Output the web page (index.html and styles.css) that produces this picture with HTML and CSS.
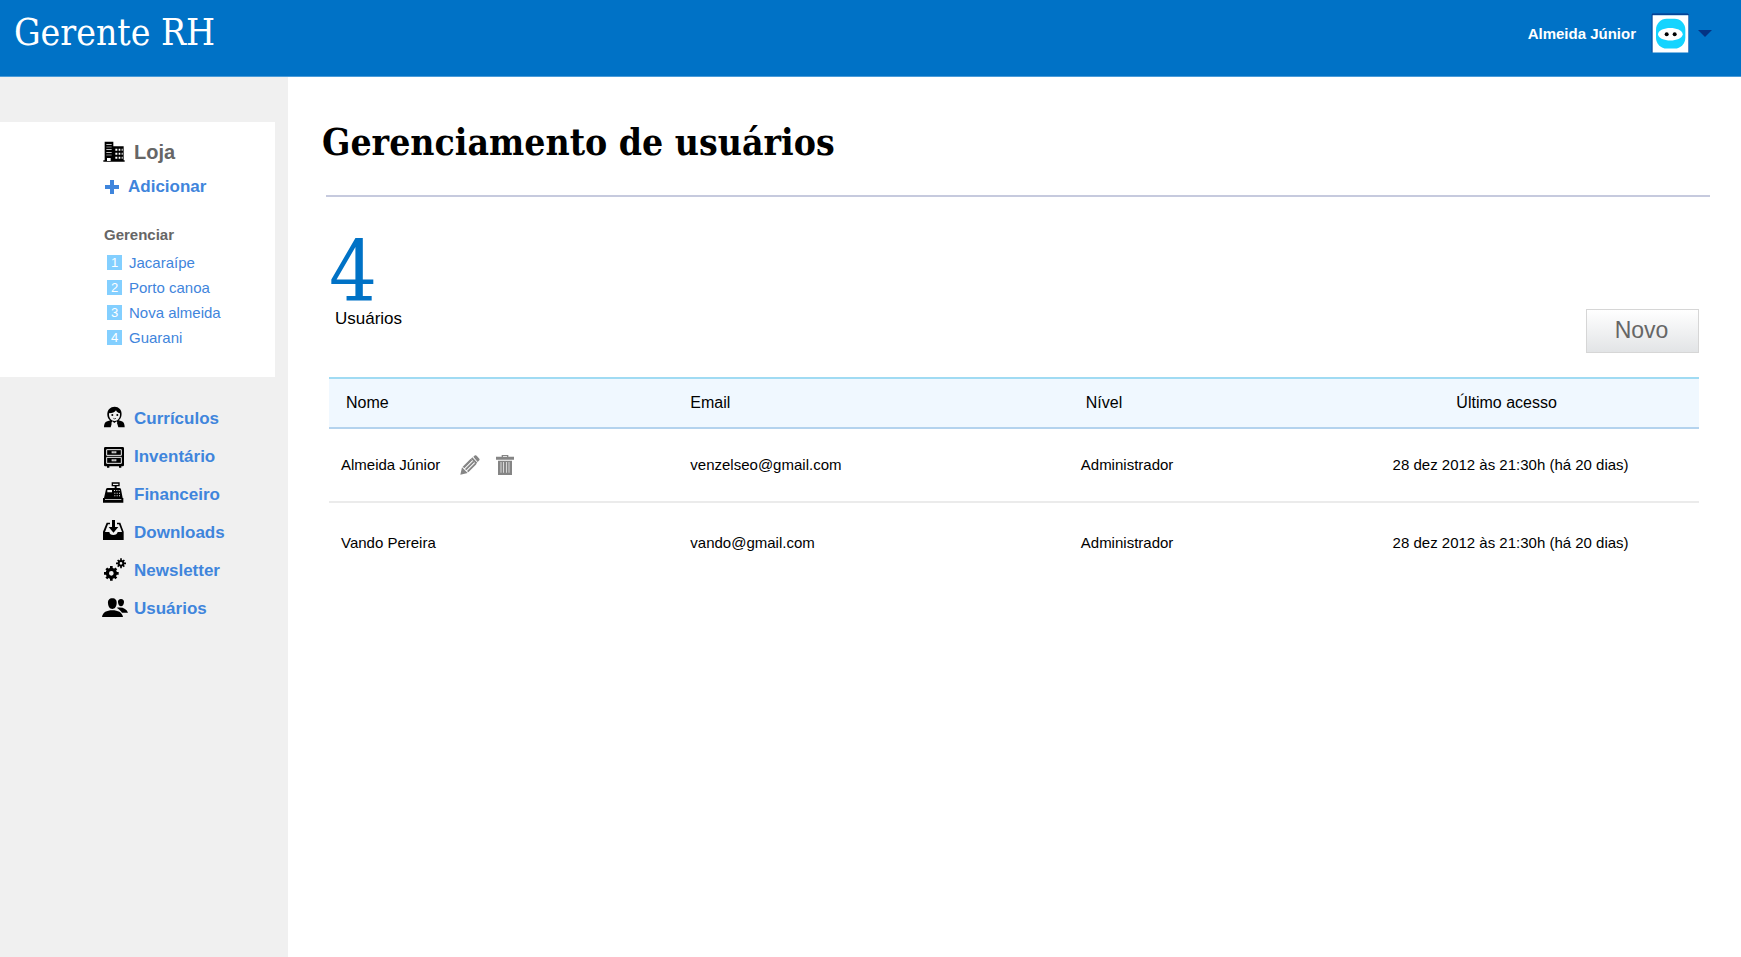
FILE: index.html
```html
<!DOCTYPE html>
<html lang="pt-BR">
<head>
<meta charset="utf-8">
<title>Gerente RH</title>
<link rel="stylesheet" href="styles.css">
</head>
<body>
<header class="topbar">
  <a class="brand" href="#">Gerente RH</a>
  <button class="account" type="button">
    <span>Almeida Júnior</span>
    <svg class="avatar" viewBox="0 0 114 117" aria-hidden="true">
      <path fill="#063586" d="M4 0h106l4 4v112h-2V4H5v112H2V4z"/>
      <path fill="#fff" d="M5 5h107v112H5z"/>
      <rect x="15" y="16" width="88" height="89" rx="32" fill="#14d4ff"/>
      <path fill="#fff" d="M21 62c2-25 72-25 74 0-2 25-72 25-74 0z"/>
      <circle cx="47" cy="62" r="6"/><circle cx="71" cy="62" r="6"/>
    </svg>
    <svg class="caret" viewBox="0 0 42 21" aria-hidden="true"><path fill="#043384" d="M0 0h42L21 21z"/></svg>
  </button>
</header>
<div class="layout">
  <aside class="sidebar">
    <section class="store">
      <h2 class="store-title">
        <svg class="icon" viewBox="0 0 78 78" aria-hidden="true">
          <path d="M8 8h26v14h31v42h3v4H4v-4h4z"/>
          <path fill="#fff" d="M13 15h16v2H13zm0 8h16v2H13zm0 8h16v2H13zm0 8h16v2H13zm0 8h16v2H13zM15 57h11v9H15zM40 29h6v6h-6zm10 0h5v6h-5zm9 0h3v6h-3zM40 41h6v6h-6zm10 0h5v6h-5zm9 0h3v6h-3zM40 53h6v6h-6zm10 0h5v6h-5zm9 0h3v6h-3z"/>
        </svg>
        Loja
      </h2>
      <a class="add" href="#">
        <svg class="plus" viewBox="0 0 42 42" aria-hidden="true"><path d="M15 0h12v15h15v12H27v15H15V27H0V15h15z"/></svg>
        Adicionar
      </a>
      <h3 class="manage">Gerenciar</h3>
      <ul class="stores">
        <li><span class="num">1</span><a href="#">Jacaraípe</a></li>
        <li><span class="num">2</span><a href="#">Porto canoa</a></li>
        <li><span class="num">3</span><a href="#">Nova almeida</a></li>
        <li><span class="num">4</span><a href="#">Guarani</a></li>
      </ul>
    </section>
    <nav class="menu">
      <a href="#">
        <svg class="icon" viewBox="0 0 78 78" aria-hidden="true">
          <path d="M6 64c0-9 2-16 10-18l9-3C12 35 11 3 38 2c26 1 25 33 12 41l9 3c7 2 9 9 9 18H49l-3-10H29l-3 10z"/>
          <path fill="#f0f0f0" d="M21 22c10 0 18-4 21-9 2 5 7 8 12 9 1 14-6 23-16 23S20 37 21 22z"/>
          <path fill="#f0f0f0" d="M31 46l6 5 7-5 2 5-5 13h-8l-5-13z"/>
          <circle cx="31" cy="27" r="3"/><circle cx="46" cy="27" r="3"/>
          <path fill="none" stroke="#000" stroke-width="2" d="M34 37q4 3 8 0"/>
        </svg>
        Currículos
      </a>
      <a href="#">
        <svg class="icon" viewBox="0 0 78 78" aria-hidden="true">
          <path d="M10 9h52q4 0 4 4v50q0 4-4 4h-4v4h-7v-4H22v4h-7v-4h-5q-4 0-4-4V13q0-4 4-4z"/>
          <path fill="none" stroke="#f0f0f0" stroke-width="3" d="M14 17h44v17H14zM14 40h44v18H14z"/>
          <path fill="#f0f0f0" d="M29 22h14v6H29zM29 46h14v6H29z"/>
          <path d="M31 23h10v2H31zM31 47h10v2H31z"/>
        </svg>
        Inventário
      </a>
      <a href="#">
        <svg class="icon" viewBox="0 0 78 78" aria-hidden="true">
          <path d="M29 1h24v12h-9v5h8q4 0 5 4l5 26h2v14H3V48h3l6-26q1-4 5-4h21v-5h-9z"/>
          <path fill="#f0f0f0" d="M33 5h16v4H33zM16 24h14v7H16zM9 51h49v2H9zM36 24h3v3h-3zm7 0h3v3h-3zm7 0h3v3h-3zM37 32h3v3h-3zm7 0h3v3h-3zm7 0h3v3h-3zM37 40h3v3h-3zm7 0h3v3h-3zm7 0h3v3h-3z"/>
        </svg>
        Financeiro
      </a>
      <a href="#">
        <svg class="icon" viewBox="0 0 78 78" aria-hidden="true">
          <path d="M3 35L14 8h10v5h-6L9 36h13q1 9 12 9t13-9h13L51 13h-6V8h10l10 27v25H3z"/>
          <path d="M30 0h9v21h10L34.500 38 20 21h10z"/>
        </svg>
        Downloads
      </a>
      <a href="#">
        <svg class="icon" viewBox="0 0 78 78" aria-hidden="true">
          <g fill="none" stroke="#000">
            <circle cx="28" cy="46" r="12" stroke-width="10"/>
            <path stroke-width="8" d="M28 33v-9M28 59v9M15 46H6M41 46h9M37 37l6-6M19 55l-6 6M19 37l-6-6M37 55l6 6"/>
            <circle cx="57" cy="16" r="7" stroke-width="6"/>
            <path stroke-width="5" d="M57 9V1M57 23v8M50 16h-8M64 16h8M62 11l5-5M52 21l-5 5M52 11l-5-5M62 21l5 5"/>
          </g>
        </svg>
        Newsletter
      </a>
      <a href="#">
        <svg class="icon" viewBox="0 0 78 78" aria-hidden="true">
          <path d="M57 9c6 0 10 4 9 10-1 8-4 12-9 12s-8-4-9-12c-1-6 3-10 9-10z"/>
          <path d="M44 35c18-3 30 3 34 15H60c-4-7-10-11-16-15z"/>
          <path d="M31 7c9 0 14 6 13 15-1 12-6 17-13 17s-12-5-13-17C17 13 22 7 31 7z"/>
          <path d="M0 63c2-14 14-20 31-20s29 6 32 20z"/>
        </svg>
        Usuários
      </a>
    </nav>
  </aside>
  <main class="content">
    <h1 class="title">Gerenciamento de usuários</h1>
    <section class="users">
      <div class="summary">
        <div class="stat"><span class="count">4</span><span class="label">Usuários</span></div>
        <button class="new" type="button">Novo</button>
      </div>
      <table class="grid">
        <colgroup><col class="c-name"><col class="c-mail"><col class="c-level"><col class="c-last"></colgroup>
        <thead>
          <tr><th class="inset">Nome</th><th>Email</th><th class="inset">Nível</th><th class="last">Último acesso</th></tr>
        </thead>
        <tbody>
          <tr>
            <td>
              <div class="person">
                <span>Almeida Júnior</span>
                <button class="action" type="button" aria-label="Editar">
                  <svg viewBox="0 0 60 60" aria-hidden="true">
                    <path d="M40 5l5-4q3-1 5 1l8 9q2 3 0 5l-5 5zM37 7l15 16-4 4-15-16zM1 59l5-22 17 17zM8 35L32 11l5 5-24 24zM15 42l24-24 4 4-24 24zM21 48l24-24 4 4-24 24z"/>
                  </svg>
                </button>
                <button class="action" type="button" aria-label="Excluir">
                  <svg viewBox="0 0 60 60" aria-hidden="true">
                    <path fill-rule="evenodd" d="M20 5V0h20v5h17v9H3V5zM24 3v2h12V3zM9 17h42v43H9zM17 21v32h2V21zm8 0v32h2V21zm8 0v32h2V21zm8 0v32h2V21z"/>
                  </svg>
                </button>
              </div>
            </td>
            <td>venzelseo@gmail.com</td><td>Administrador</td><td class="last">28 dez 2012 às 21:30h (há 20 dias)</td>
          </tr>
          <tr><td>Vando Pereira</td><td>vando@gmail.com</td><td>Administrador</td><td class="last">28 dez 2012 às 21:30h (há 20 dias)</td></tr>
        </tbody>
      </table>
    </section>
  </main>
</div>
</body>
</html>
```
FILE: styles.css
```css
* { box-sizing: border-box; }
body {
  margin: 0;
  min-height: 100vh;
  display: flex;
  flex-direction: column;
  background: #fff;
  color: #000;
  font: 15px/20px "Liberation Sans", Arial, sans-serif;
}
h1, h2, h3, ul { margin: 0; padding: 0; }
ul { list-style: none; }
a { color: #3f85dc; text-decoration: none; }
button { font-family: inherit; cursor: pointer; }
svg { display: block; flex: none; }

.topbar {
  display: flex;
  justify-content: space-between;
  align-items: flex-start;
  padding: 13px 29px 0 14px;
  height: 77px;
  background: #0072c6;
  border-bottom: 1px solid #4a9bd8;
}
.brand {
  color: #fff;
  font: 37px/40px "Rockwell", "DejaVu Serif Condensed", "DejaVu Serif", serif;
}
.account {
  display: flex;
  align-items: center;
  padding: 0;
  border: 0;
  background: none;
  color: #fff;
  font-size: 15px;
  font-weight: bold;
}
.avatar { width: 38px; height: 40px; margin: 0 9px 0 15px; }
.caret { width: 14px; height: 7px; }

.layout { flex: 1; display: flex; }
.sidebar { flex: none; width: 288px; padding-top: 45px; background: #f0f0f0; }
.store {
  margin-right: 13px;
  padding: 17px 0 27px 102px;
  background: #fff;
}
.store-title {
  display: flex;
  align-items: center;
  gap: 6px;
  color: #666;
  font-size: 20px;
  line-height: 26px;
}
.icon { width: 26px; height: 26px; }
.add {
  display: flex;
  align-items: center;
  gap: 9px;
  margin: 12px 0 0 3px;
  font-size: 17px;
  font-weight: bold;
}
.plus { width: 14px; height: 14px; fill: #3f85dc; }
.manage { margin: 28px 0 5px 2px; color: #666; font-size: 15px; line-height: 20px; }
.stores { padding-left: 5px; }
.stores li { display: flex; align-items: center; gap: 7px; height: 25px; }
.num {
  width: 15px;
  height: 15px;
  background: #83cfff;
  color: #fff;
  font-size: 13px;
  line-height: 15px;
  text-align: center;
}
.menu { padding: 23px 0 0 102px; }
.menu a {
  display: flex;
  align-items: center;
  gap: 6px;
  height: 38px;
  font-size: 17px;
  font-weight: bold;
}

.content { flex: 1; min-width: 0; padding: 41px 31px 0 38px; }
.title {
  margin-left: -4px;
  font: bold 37px/48px "Rockwell", "DejaVu Serif Condensed", "DejaVu Serif", serif;
}
.users { margin-top: 29px; padding: 40px 11px 0 3px; position: relative; }
.users::before {
  content: "";
  position: absolute;
  top: 0;
  left: 0;
  right: 0;
  height: 2px;
  background: #c6cade;
}
.summary { display: flex; justify-content: space-between; align-items: flex-end; height: 118px; }
.stat { display: flex; flex-direction: column; align-self: flex-start; }
.count {
  color: #0072c6;
  font: 84px/74px "Rockwell", "DejaVu Serif Condensed", "DejaVu Serif", serif;
}
.label { padding-left: 6px; font-size: 17px; }
.new {
  width: 113px;
  height: 44px;
  padding: 0 2px 2px 0;
  border: 1px solid #d6d6d6;
  background: linear-gradient(#fff, #e2e4e6);
  color: #666;
  font-size: 23px;
}
.grid {
  width: 100%;
  margin-top: 24px;
  border-collapse: separate;
  border-spacing: 0;
  table-layout: fixed;
}
.c-name { width: 25.5%; }
.c-mail { width: 28.5%; }
.c-level { width: 18.5%; }
.c-last { width: 27.5%; }
.grid th {
  height: 52px;
  padding: 0 12px;
  border-top: 2px solid #a0dbf3;
  border-bottom: 2px solid #b4d3ee;
  background: #f0f8ff;
  font-size: 16px;
  font-weight: normal;
  text-align: left;
}
.grid th.inset { padding-left: 17px; }
.grid td { height: 74px; padding: 0 12px; }
.grid tr:first-child td { border-bottom: 2px solid #ebebeb; }
.grid tr:last-child td { height: 80px; }
.grid .last { text-align: center; }
.grid th.last { padding-right: 20px; }
.person { display: flex; align-items: center; gap: 15px; }
.person span { margin-right: 5px; }
.action { padding: 0; border: 0; background: none; }
.action svg { width: 20px; height: 20px; fill: #858585; }
```
